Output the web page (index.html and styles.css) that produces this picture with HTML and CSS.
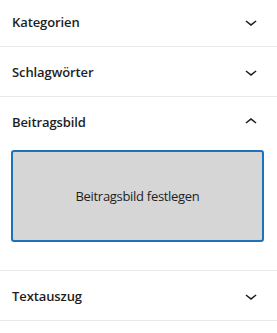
FILE: index.html
```html
<!DOCTYPE html>
<html lang="de">
<head>
<meta charset="utf-8">
<link rel="stylesheet" href="styles.css">
</head>
<body>
<div class="panels">
  <div class="panel">
    <div class="head"><span class="title">Kategorien</span>
      <svg class="chev" viewBox="0 0 24 24" width="24" height="24"><path d="M17.5 11.6L12 16l-5.5-4.4.9-1.2L12 14l4.6-3.6 1 1.2z"/></svg>
    </div>
  </div>
  <div class="panel">
    <div class="head"><span class="title">Schlagwörter</span>
      <svg class="chev" viewBox="0 0 24 24" width="24" height="24"><path d="M17.5 11.6L12 16l-5.5-4.4.9-1.2L12 14l4.6-3.6 1 1.2z"/></svg>
    </div>
  </div>
  <div class="panel">
    <div class="head"><span class="title">Beitragsbild</span>
      <svg class="chev" viewBox="0 0 24 24" width="24" height="24"><path d="M6.5 12.4L12 8l5.5 4.4-.9 1.2L12 10l-4.6 3.6-1-1.2z"/></svg>
    </div>
    <div class="body">
      <button class="toggle">Beitragsbild festlegen</button>
    </div>
  </div>
  <div class="panel">
    <div class="head"><span class="title">Textauszug</span>
      <svg class="chev" viewBox="0 0 24 24" width="24" height="24"><path d="M17.5 11.6L12 16l-5.5-4.4.9-1.2L12 14l4.6-3.6 1 1.2z"/></svg>
    </div>
  </div>
  <div class="panel last"></div>
</div>
</body>
</html>
```
FILE: styles.css
```css
html, body {
  margin: 0;
  padding: 0;
  background: #fff;
}
body {
  font-family: "Open Sans", "Noto Sans", sans-serif;
  color: #1e1e1e;
  height: 333px;
  overflow: hidden;
}
.panels {
  margin-top: -3px;
}
.panel {
  border-bottom: 1px solid #e9e9e9;
}
.head {
  height: 49px;
  display: flex;
  align-items: center;
  justify-content: space-between;
  padding: 0 14px 0 12px;
}
.title {
  font-size: 13px;
  font-weight: 600;
  letter-spacing: -0.1px;
}
.chev {
  fill: #1e1e1e;
  display: block;
}
.body {
  padding: 4px 13px 28px 11px;
}
.toggle {
  display: flex;
  align-items: center;
  justify-content: center;
  width: 100%;
  height: 92px;
  background: #d6d6d6;
  border: 2px solid #1f72b8;
  border-radius: 3px;
  box-sizing: border-box;
  font-family: "Open Sans", "Noto Sans", sans-serif;
  font-size: 13px;
  letter-spacing: -0.3px;
  color: #1e1e1e;
  padding: 0;
}
.last {
  height: 12px;
  border-bottom: none;
}
```
